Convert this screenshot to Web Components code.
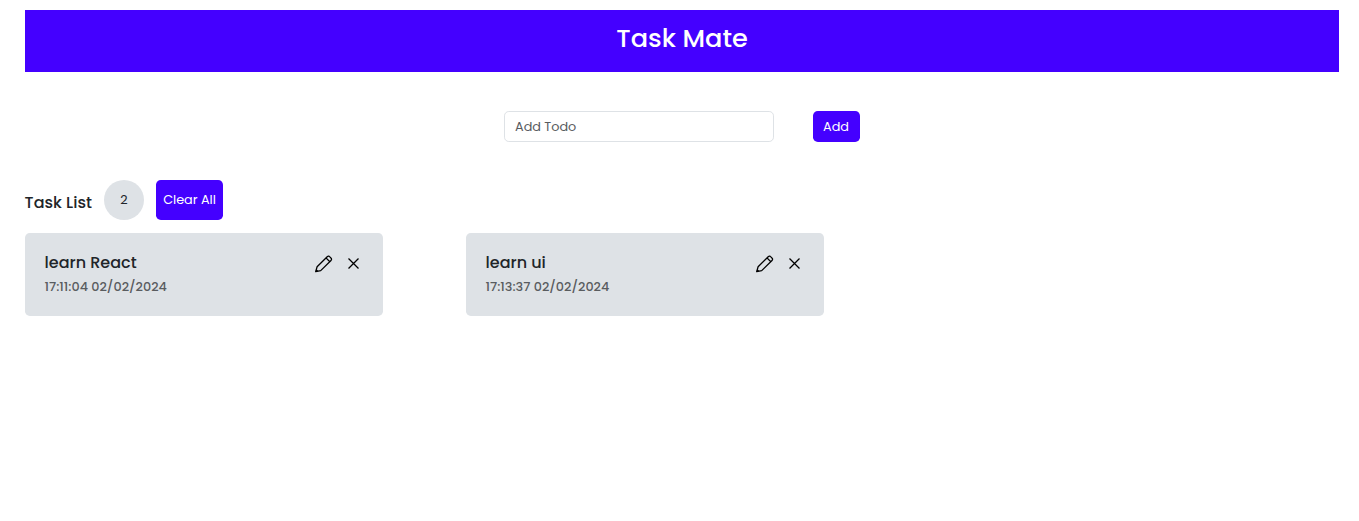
<!DOCTYPE html>
<html lang="en">
<head>
<meta charset="utf-8">
<title>Task Mate</title>
<style>
body { margin: 0; background: #fff; color: #212529; font: 12.8px/20px Poppins, Inter, sans-serif; }
</style>
</head>
<body>
<task-app></task-app>
<script>
class BaseElement extends HTMLElement {
  connectedCallback() {
    if (!this.shadowRoot) this.attachShadow({ mode: 'open' }).innerHTML = this.render();
  }
}

customElements.define('app-header', class extends BaseElement {
  render() {
    return `<style>
      :host { display: block; height: 62px; background: #4400ff; color: #fff; text-align: center; }
      h1 { margin: 0; padding-top: 12px; font-size: 25.6px; line-height: 32px; font-weight: 500; }
    </style><h1><slot></slot></h1>`;
  }
});

customElements.define('app-button', class extends BaseElement {
  render() {
    return `<style>
      :host { display: block; flex: none; }
      button { display: flex; align-items: center; justify-content: center; width: 100%; height: 100%; padding: 0 var(--nudge, 0px) 0 0; border: 0;
        border-radius: 4.8px; background: #4400ff; color: #fff; font: inherit; white-space: nowrap; }
    </style><button type="button"><slot></slot></button>`;
  }
});

customElements.define('todo-form', class extends BaseElement {
  render() {
    return `<style>
      :host { display: flex; justify-content: center; gap: 39px; margin-top: 39px; }
      input { box-sizing: border-box; width: 270px; height: 31px; padding: 0 10px; border: 1px solid #dee2e6; border-radius: 4.8px;
        background: #fff; color: #212529; font: inherit; }
      input::placeholder { color: #595c5f; opacity: 1; }
      app-button { width: 47px; height: 31px; --nudge: 1px; }
    </style><input placeholder="Add Todo" aria-label="Add Todo"><app-button>Add</app-button>`;
  }
});

customElements.define('list-toolbar', class extends BaseElement {
  render() {
    return `<style>
      :host { display: flex; gap: 12px; height: 40px; margin-top: 38px; }
      h2 { width: 67px; margin: 0 0 0 -.4px; padding-top: 13px; font-size: 16px; line-height: 20px; font-weight: 500; white-space: nowrap; }
      .count { width: 40px; border-radius: 50%; background: #dee2e6; text-align: center; line-height: 40px; margin-left: .4px; }
      app-button { width: 67px; height: 40px; }
    </style><h2>Task List</h2><span class="count">${this.getAttribute('count')}</span><app-button>Clear All</app-button>`;
  }
});

customElements.define('task-card', class extends BaseElement {
  render() {
    return `<style>
      :host { box-sizing: border-box; display: flex; justify-content: space-between; width: 358px; height: 83px; padding: 19px 18px 0 19.6px;
        border-radius: 4.8px; background: #dee2e6; }
      h3 { margin: 0; font-size: 16px; line-height: 21px; font-weight: 500; white-space: nowrap; }
      time { display: block; margin-top: 4px; color: #595c5f; font-weight: 500; font-size: 12.8px; line-height: 19px; }
      .actions { display: flex; align-items: center; gap: 9px; height: 23px; color: #000; }
      svg { display: block; fill: none; stroke: currentColor; stroke-width: 1.3; stroke-linejoin: round; }
    </style>
    <div><h3>${this.getAttribute('name')}</h3><time>${this.getAttribute('time')}</time></div>
    <div class="actions">
      <svg width="18" height="18" viewBox="0 0 18 18" aria-label="Edit"><path d="M.7 16.6 2.1 11.8 12.2 1.7Q13.1.8 14 1.2 15.6 2.1 16.4 3.6 16.9 4.6 16 5.5L5.7 15.6ZM11 2.9l3.8 3.8"/><path d="M.5 16.9 1.3 14.1 3.3 16.1Z" fill="currentColor" stroke="none"/></svg>
      <svg width="23" height="23" viewBox="0 0 23 23" aria-label="Delete"><path d="m6.5 6.5 10 10m0-10-10 10"/></svg>
    </div>`;
  }
});

customElements.define('task-app', class extends BaseElement {
  render() {
    return `<style>
      :host { display: block; padding: 10px 20px 0 25px; }
      .cards { display: flex; gap: 83px; margin-top: 13px; }
    </style>
    <app-header>Task Mate</app-header>
    <todo-form></todo-form>
    <list-toolbar count="2"></list-toolbar>
    <div class="cards">
      <task-card name="learn React" time="17:11:04 02/02/2024"></task-card>
      <task-card name="learn ui" time="17:13:37 02/02/2024"></task-card>
    </div>`;
  }
});
</script>
</body>
</html>
